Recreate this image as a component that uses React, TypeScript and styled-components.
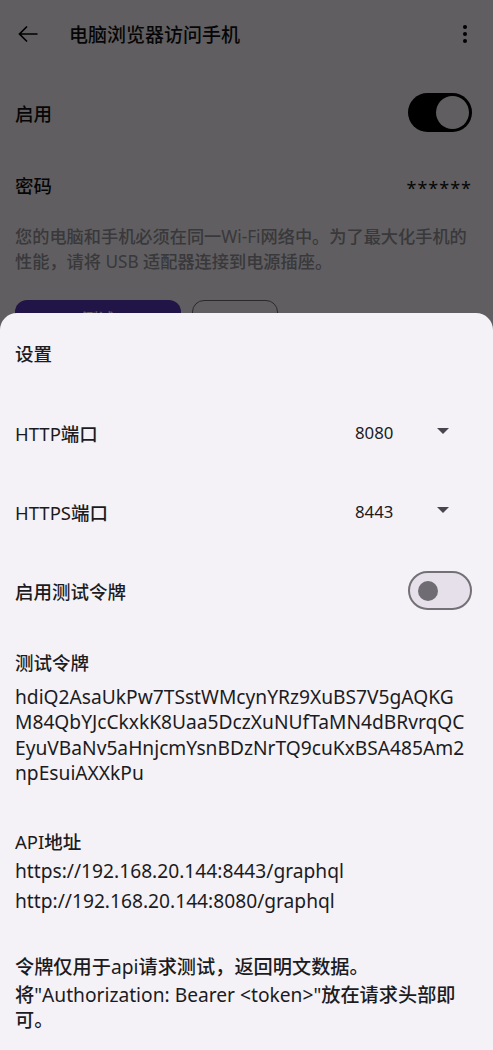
import React from 'react';
import styled, { createGlobalStyle } from 'styled-components';

const GlobalStyle = createGlobalStyle`
  html, body {
    margin: 0;
    padding: 0;
    background: #fcf8fc;
  }
  body {
    font-family: "Noto Sans", "Noto Sans CJK SC Medium", "Noto Sans CJK SC", sans-serif;
    color: #1c1b1f;
    overflow: hidden;
  }
`;

const Screen = styled.div`
  position: relative;
  height: 1050px;
  overflow: hidden;
`;

const Page = styled.div`
  display: flex;
  flex-direction: column;
`;

const AppBar = styled.div`
  height: 68px;
  display: flex;
  align-items: center;
  padding: 0 16px 0 16px;
  gap: 28px;
`;

const IconButton = styled.div`
  width: 24px;
  height: 24px;
  display: flex;
  align-items: center;
  justify-content: center;
  color: #000;
`;

const Title = styled.div`
  flex: 1;
  font-size: 19px;
  font-weight: 700;
  color: #111;
  padding-left: 1px;
`;

const Row = styled.div<{ h: number }>`
  height: ${(p) => p.h}px;
  display: flex;
  align-items: center;
  justify-content: space-between;
  padding: 0 21px 0 15px;
`;

const Label = styled.div`
  font-size: 18.5px;
  color: #111;
`;

const Masked = styled.div`
  font-size: 18px;
  letter-spacing: 1px;
  color: #111;
  padding-top: 6px;
`;

const Hint = styled.p`
  margin: 11px 15px 0 15px;
  font-size: 17.2px;
  line-height: 25px;
  color: #95939a;
`;

const Buttons = styled.div`
  display: flex;
  gap: 11px;
  padding: 26px 15px 0 15px;
`;

const FilledButton = styled.div`
  width: 166px;
  height: 40px;
  border-radius: 12px;
  background: #5838bd;
  color: #fff;
  font-size: 16px;
  display: flex;
  justify-content: center;
  padding-top: 6px;
  box-sizing: border-box;
`;

const OutlinedButton = styled.div`
  width: 86px;
  height: 40px;
  border-radius: 12px;
  border: 1.5px solid #6f6c75;
  box-sizing: border-box;
`;

const Track = styled.div<{ on: boolean }>`
  width: 64px;
  height: 39px;
  border-radius: 20px;
  box-sizing: border-box;
  display: flex;
  align-items: center;
  justify-content: ${(p) => (p.on ? 'flex-end' : 'flex-start')};
  padding: 0 ${(p) => (p.on ? 3 : 8)}px;
  background: ${(p) => (p.on ? '#000' : '#e6e0ea')};
  border: ${(p) => (p.on ? 'none' : '2.5px solid #737077')};
`;

const Thumb = styled.div<{ on: boolean }>`
  width: ${(p) => (p.on ? 33 : 20)}px;
  height: ${(p) => (p.on ? 33 : 20)}px;
  border-radius: 50%;
  background: ${(p) => (p.on ? '#fcf8fc' : '#6f6c73')};
`;

const Scrim = styled.div`
  position: absolute;
  inset: 0;
  background: rgba(0, 0, 0, 0.62);
`;

const Sheet = styled.div`
  position: absolute;
  top: 313px;
  left: 0;
  right: 0;
  bottom: 0;
  background: #f4f2f6;
  border-radius: 17px 17px 0 0;
  display: flex;
  flex-direction: column;
`;

const SheetTitle = styled.div`
  height: 80px;
  padding: 0 15px;
  display: flex;
  align-items: center;
  font-size: 18.5px;
  color: #1c1b1f;
`;

const Field = styled.div`
  height: 79px;
  display: flex;
  align-items: center;
  padding: 0 21px 0 15px;
`;

const FieldLabel = styled.div`
  flex: 1;
  font-size: 18.5px;
  color: #1c1b1f;
`;

const Select = styled.div`
  width: 94px;
  display: flex;
  align-items: center;
  justify-content: space-between;
  padding-right: 23px;
`;

const SelectValue = styled.div`
  font-size: 16.8px;
  color: #1c1b1f;
`;

const Caret = styled.div`
  width: 0;
  height: 0;
  border-left: 6px solid transparent;
  border-right: 6px solid transparent;
  border-top: 6px solid #49454f;
  margin-bottom: 4px;
`;

const Block = styled.div<{ top: number }>`
  padding: ${(p) => p.top}px 24px 0 15px;
`;

const BlockTitle = styled.div`
  font-size: 18.5px;
  line-height: 28px;
  color: #1c1b1f;
`;

const Token = styled.div`
  font-size: 19.2px;
  line-height: 25.4px;
  word-break: break-all;
  color: #1c1b1f;
  padding-top: 7px;
`;

const Url = styled.div`
  font-size: 19.2px;
  line-height: 30px;
  color: #1c1b1f;
  &:first-of-type {
    margin-top: 1px;
  }
`;

const Note = styled.div<{ lead?: boolean }>`
  font-size: 19.2px;
  line-height: ${(p) => (p.lead ? 30 : 25.5)}px;
  color: #1c1b1f;
`;

const BackArrow = () => (
  <svg width="22" height="22" viewBox="0 0 22 22" fill="none" stroke="currentColor" strokeWidth="1.7">
    <path d="M20.5 11H2.5M10 3.5L2.5 11l7.5 7.5" />
  </svg>
);

const MoreDots = () => (
  <svg width="6" height="20" viewBox="0 0 6 20" fill="currentColor">
    <circle cx="3" cy="3" r="2" />
    <circle cx="3" cy="10" r="2" />
    <circle cx="3" cy="17" r="2" />
  </svg>
);

const Switch = ({ on }: { on: boolean }) => (
  <Track on={on}>
    <Thumb on={on} />
  </Track>
);

const token =
  'hdiQ2AsaUkPw7TSstWMcynYRz9XuBS7V5gAQKGM84QbYJcCkxkK8Uaa5DczXuNUfTaMN4dBRvrqQCEyuVBaNv5aHnjcmYsnBDzNrTQ9cuKxBSA485Am2npEsuiAXXkPu';

export default function App() {
  return (
    <Screen>
      <GlobalStyle />
      <Page>
        <AppBar>
          <IconButton>
            <BackArrow />
          </IconButton>
          <Title>电脑浏览器访问手机</Title>
          <IconButton>
            <MoreDots />
          </IconButton>
        </AppBar>
        <Row h={89}>
          <Label>启用</Label>
          <Switch on />
        </Row>
        <Row h={56}>
          <Label>密码</Label>
          <Masked>******</Masked>
        </Row>
        <Hint>您的电脑和手机必须在同一Wi-Fi网络中。为了最大化手机的性能，请将 USB 适配器连接到电源插座。</Hint>
        <Buttons>
          <FilledButton>测试</FilledButton>
          <OutlinedButton />
        </Buttons>
      </Page>
      <Scrim />
      <Sheet>
        <SheetTitle>设置</SheetTitle>
        <Field>
          <FieldLabel>HTTP端口</FieldLabel>
          <Select>
            <SelectValue>8080</SelectValue>
            <Caret />
          </Select>
        </Field>
        <Field>
          <FieldLabel>HTTPS端口</FieldLabel>
          <Select>
            <SelectValue>8443</SelectValue>
            <Caret />
          </Select>
        </Field>
        <Field>
          <FieldLabel>启用测试令牌</FieldLabel>
          <Switch on={false} />
        </Field>
        <Block top={19}>
          <BlockTitle>测试令牌</BlockTitle>
          <Token>{token}</Token>
        </Block>
        <Block top={42}>
          <BlockTitle>API地址</BlockTitle>
          <Url>https://192.168.20.144:8443/graphql</Url>
          <Url>http://192.168.20.144:8080/graphql</Url>
        </Block>
        <Block top={36}>
          <Note lead>令牌仅用于api请求测试，返回明文数据。</Note>
          <Note>将"Authorization: Bearer &lt;token&gt;"放在请求头部即可。</Note>
        </Block>
      </Sheet>
    </Screen>
  );
}
